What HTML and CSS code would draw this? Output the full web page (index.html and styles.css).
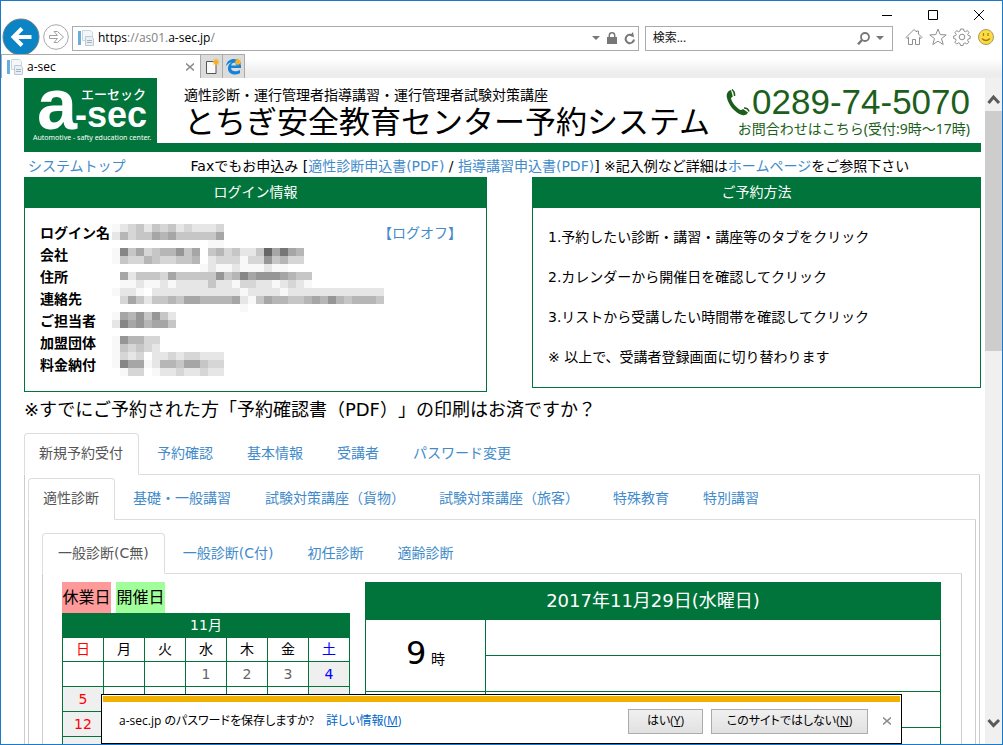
FILE: index.html
```html
<!DOCTYPE html>
<html lang="ja">
<head>
<meta charset="utf-8">
<title>a-sec</title>
<link rel="stylesheet" href="styles.css">
</head>
<body>
<div class="window">
  <header class="chrome">
    <div class="window-controls">
      <button class="ctl" aria-label="最小化"><svg width="12" height="12" viewBox="0 0 12 12"><path d="M1 6.500h10" class="ln"/></svg></button>
      <button class="ctl" aria-label="最大化"><svg width="12" height="12" viewBox="0 0 12 12"><path d="M1.500 1.500h9v9h-9z" class="ln"/></svg></button>
      <button class="ctl" aria-label="閉じる"><svg width="12" height="12" viewBox="0 0 12 12"><path d="M1 1l10 10M11 1L1 11" class="ln"/></svg></button>
    </div>
    <div class="toolbar">
      <button class="nav-back" aria-label="戻る"><svg width="38" height="38" viewBox="0 0 38 38"><circle cx="19" cy="19" r="18" fill="#0a84c4" stroke="#6e7f89"/><path d="M29.500 19H12M20 10.500L11.500 19l8.500 8.500" fill="none" stroke="#fff" stroke-width="4"/></svg></button>
      <button class="nav-fwd" aria-label="進む"><svg width="26" height="26" viewBox="0 0 26 26"><circle cx="13" cy="13" r="12.300" fill="#fff" stroke="#a9a9a9"/><path d="M6.500 11.500h8l-3.500-4h3.500l6 5.500-6 5.500H11l3.500-4h-8z" fill="#fff" stroke="#a0a0a0"/></svg></button>
      <div class="address">
        <svg width="16" height="16" viewBox="0 0 16 16"><path d="M0 1h3v14H0z" fill="#6aaedb"/><path d="M4.500.5h8l2 2v8h-10z" fill="#f3f7fa" stroke="#c9d6df"/><path d="M7.500 6.500h6l2 2v7h-8z" fill="#e9eff3" stroke="#bccad4"/><path d="M9 10.500h5M9 12.500h5" stroke="#9fb4c4"/></svg>
        <span class="url">https<i>://as01.</i>a-sec.jp<i>/</i></span>
        <svg width="8" height="4" viewBox="0 0 8 4"><path d="M0 0h8L4 4z" fill="#777"/></svg>
        <svg width="10" height="13" viewBox="0 0 10 13"><path d="M0 5h10v7H0z" fill="#777"/><path d="M2.300 6V3.500a2.700 2.700 0 0 1 5.400 0V6" fill="none" stroke="#777" stroke-width="1.500"/></svg>
        <button class="bare" aria-label="更新"><svg width="12" height="13" viewBox="0 0 12 13"><path d="M8.500 3.700A4.200 4.200 0 1 0 10 7.500" fill="none" stroke="#777" stroke-width="2"/><path d="M6 3.500L9 0l1 5.500z" fill="#777"/></svg></button>
      </div>
      <div class="search">
        <input type="text" aria-label="検索" placeholder="検索...">
        <svg width="13" height="13" viewBox="0 0 13 13"><circle cx="8" cy="5" r="4" fill="none" stroke="#777" stroke-width="1.800"/><path d="M5 8L1 12.300" stroke="#777" stroke-width="2.400"/></svg>
        <svg width="8" height="4" viewBox="0 0 8 4"><path d="M0 0h8L4 4z" fill="#777"/></svg>
      </div>
      <div class="tools">
        <button class="bare" aria-label="ホーム"><svg width="18" height="18" viewBox="0 0 18 18"><path d="M1 9.500L9 1.500l2.500 2.500V3h2v3L17 9.500l-1 1-1.500-1.200V16.500h-4v-5h-3v5h-4V9.300L2 10.500z" class="tool"/></svg></button>
        <button class="bare" aria-label="お気に入り"><svg width="18" height="18" viewBox="0 0 18 18"><path d="M9 1l2.200 5.600 6 .3-4.700 3.700 1.700 5.900L9 13.200l-5.200 3.300 1.700-5.900L.8 6.900l6-.3z" class="tool"/></svg></button>
        <button class="bare" aria-label="ツール"><svg width="18" height="18" viewBox="0 0 18 18"><path d="M7.500 1h3l.5 2 1.500.7L14.400 2.600 16 4.600 14.700 6.300l.5 1.200 2 .5v2.500l-2 .5-.6 1.400 1.200 1.800-2 1.800-1.700-1.200-1.600.7-.5 2h-2.500l-.5-2-1.600-.7-1.800 1.200-1.800-1.800 1.200-1.800L2.700 11l-2-.5V8l2-.5.6-1.200L2 4.600l1.700-2 1.900 1.100L7 3z" class="tool"/><circle cx="9" cy="9" r="2.800" class="tool"/></svg></button>
        <button class="bare" aria-label="フィードバック"><svg width="18" height="18" viewBox="0 0 18 18"><circle cx="9" cy="9" r="7.500" fill="#fddb43" stroke="#a79a62"/><path d="M6.500 5v3M11 5v3M5 10.500q4 4 8 0" fill="none" stroke="#a07c10" stroke-width="1.200"/></svg></button>
      </div>
    </div>
    <div class="tabstrip">
      <div class="tab">
        <svg width="16" height="16" viewBox="0 0 16 16"><path d="M0 1h3v14H0z" fill="#6aaedb"/><path d="M4.500.5h8l2 2v8h-10z" fill="#f3f7fa" stroke="#c9d6df"/><path d="M7.500 6.500h6l2 2v7h-8z" fill="#e9eff3" stroke="#bccad4"/><path d="M9 10.500h5M9 12.500h5" stroke="#9fb4c4"/></svg>
        <span class="tab-title">a-sec</span>
        <button class="bare" aria-label="タブを閉じる"><svg width="8" height="8" viewBox="0 0 8 8"><path d="M0 .5l8 7M8 .5l-8 7" stroke="#8b8b8b" stroke-width="1.500"/></svg></button>
      </div>
      <button class="newtab" aria-label="新しいタブ"><svg width="16" height="17" viewBox="0 0 16 17"><path d="M2.500 3.500h9.500v12H2.500z" fill="#fafafa" stroke="#555"/><circle cx="12" cy="4" r="2.500" fill="#ffc93a"/><path d="M12 .5v7M8.500 4h7M9.500 1.500l5 5M14.500 1.500l-5 5" stroke="#f0aa28"/></svg></button>
      <button class="newtab" aria-label="Microsoft Edge"><svg width="18" height="17" viewBox="0 0 18 17"><path d="M1 8C2 3 5 1 9 1c5 0 7 3 7 7v2H6c.5 4 5 4 9 2v3.200C9 18 2.500 16 3 9.500 3.200 7 5 5.300 7 4.500 4.500 4.700 2.500 6 1 8zM6.200 7.400h5.300C11.500 4 7 4 6.200 7.400z" fill="#1482d8"/><circle cx="13" cy="4" r="2.500" fill="#ffc93a"/><path d="M13 .5v7M9.500 4h7M10.500 1.500l5 5M15.500 1.500l-5 5" stroke="#f0aa28"/></svg></button>
    </div>
  </header>

  <div class="viewport">
    <main class="page">
      <div class="banner">
        <svg class="logo" width="133" height="65" viewBox="0 0 133 65" role="img" aria-label="a-sec">
          <text x="13" y="51" class="logo-a">a</text>
          <text x="51" y="49" class="logo-sec">-sec</text>
          <text x="57" y="21" class="logo-kana">エーセック</text>
          <text x="9" y="62" class="logo-sub">Automotive - safty education center.</text>
        </svg>
        <div class="title-block">
          <p class="subtitle">適性診断・運行管理者指導講習・運行管理者試験対策講座</p>
          <h1>とちぎ安全教育センター予約システム</h1>
        </div>
        <div class="contact">
          <p class="phone"><svg width="24" height="27" viewBox="0 0 24 27"><path d="M5 1C1.500 2 0 5 1 9c1.500 7 8 15 15 17 3 .7 5-.5 6-2.500L17 20c-1 .8-2 1.300-3 .7C10 18.500 6.500 14 5 9.800c0-1 .8-1.500 1.800-2.300z" fill="#1c5f1c"/><path d="M6 .5Q9 3 8.500 7M23 22.500Q22 19 18 19" fill="none" stroke="#1c5f1c" stroke-width="1.500"/></svg><span>0289-74-5070</span></p>
          <p class="hours">お問合わせはこちら(受付:9時～17時)</p>
        </div>
      </div>

      <div class="linkrow">
        <a href="#">システムトップ</a>
        <p>Faxでもお申込み [<a href="#">適性診断申込書(PDF)</a> / <a href="#">指導講習申込書(PDF)</a>] ※記入例など詳細は<a href="#">ホームページ</a>をご参照下さい</p>
      </div>

      <div class="panels">
        <section class="panel">
          <h2>ログイン情報</h2>
          <div class="account">
            <dl>
              <dt>ログイン名</dt><dd><a href="#">【ログオフ】</a></dd>
              <dt>会社</dt><dd></dd>
              <dt>住所</dt><dd></dd>
              <dt>連絡先</dt><dd></dd>
              <dt>ご担当者</dt><dd></dd>
              <dt>加盟団体</dt><dd></dd>
              <dt>料金納付</dt><dd></dd>
            </dl>
            <svg class="mask" id="mask" width="272" height="152" viewBox="0 0 272 152" shape-rendering="crispEdges" aria-hidden="true"></svg>
          </div>
        </section>
        <section class="panel">
          <h2>ご予約方法</h2>
          <div class="steps">
            <p>1.予約したい診断・講習・講座等のタブをクリック</p>
            <p>2.カレンダーから開催日を確認してクリック</p>
            <p>3.リストから受講したい時間帯を確認してクリック</p>
            <p>※ 以上で、受講者登録画面に切り替わります</p>
          </div>
        </section>
      </div>

      <p class="notice">※すでにご予約された方「予約確認書（PDF）」の印刷はお済ですか？</p>

      <nav class="tabs"><a class="on" href="#">新規予約受付</a><a href="#">予約確認</a><a href="#">基本情報</a><a href="#">受講者</a><a href="#">パスワード変更</a></nav>
      <div class="pane outer">
        <nav class="tabs"><a class="on" href="#">適性診断</a><a href="#">基礎・一般講習</a><a href="#">試験対策講座（貨物）</a><a href="#">試験対策講座（旅客）</a><a href="#">特殊教育</a><a href="#">特別講習</a></nav>
        <div class="pane middle">
          <nav class="tabs short"><a class="on" href="#">一般診断(C無)</a><a href="#">一般診断(C付)</a><a href="#">初任診断</a><a href="#">適齢診断</a></nav>
          <div class="pane inner">
            <div class="cal-col">
              <div class="legend"><span class="closed">休業日</span><span class="open">開催日</span></div>
              <table class="calendar">
                <thead>
                  <tr><th colspan="7" class="month">11月</th></tr>
                  <tr><th class="sun">日</th><th>月</th><th>火</th><th>水</th><th>木</th><th>金</th><th class="sat">土</th></tr>
                </thead>
                <tbody>
                  <tr><td></td><td></td><td></td><td>1</td><td>2</td><td>3</td><td class="sat off">4</td></tr>
                  <tr><td class="sun off">5</td><td></td><td></td><td></td><td></td><td></td><td class="off"></td></tr>
                  <tr><td class="sun off">12</td><td></td><td></td><td></td><td></td><td></td><td class="off"></td></tr>
                  <tr><td class="sun off"></td><td></td><td></td><td></td><td></td><td></td><td class="off"></td></tr>
                </tbody>
              </table>
            </div>
            <table class="schedule">
              <thead><tr><th colspan="2">2017年11月29日(水曜日)</th></tr></thead>
              <tbody>
                <tr><th rowspan="2" class="hour"><b>9</b> 時</th><td></td></tr>
                <tr><td></td></tr>
                <tr><th rowspan="2" class="hour"></th><td></td></tr>
                <tr><td></td></tr>
              </tbody>
            </table>
          </div>
        </div>
      </div>
    </main>
    <div class="scrollbar">
      <svg class="arrow" width="17" height="33" viewBox="0 0 17 33"><path d="M3.500 25L8.500 19l5.500 6" class="chev"/></svg>
      <div class="thumb"></div>
      <svg class="arrow" width="17" height="32" viewBox="0 0 17 32"><path d="M3.500 8L8.500 13.500 14 8" class="chev"/></svg>
    </div>
  </div>

  <div class="notify" role="dialog" aria-label="パスワードの保存">
    <span>a-sec.jp のパスワードを保存しますか?</span>
    <a href="#">詳しい情報(<u>M</u>)</a>
    <div class="actions">
      <button class="act yes">はい(<u>Y</u>)</button>
      <button class="act no">このサイトではしない(<u>N</u>)</button>
      <button class="bare" aria-label="閉じる"><svg width="8" height="8" viewBox="0 0 8 8"><path d="M0 .5l8 7M8 .5l-8 7" stroke="#8b8b8b" stroke-width="1.500"/></svg></button>
    </div>
  </div>
</div>
<script src="mask.js"></script>
</body>
</html>
```
FILE: mask.js
```js
// Privacy mosaic over the account values: one hex digit of grey per 8px block.
const rows = [
  "fedcecdcedeeed",
  "ebdccabaccccca",
  "............ff",
  "f8cadcbb9ca.cbdceec6a7ab",
  "fcddbcddccb.edddfdd9cbdd",
  "...........feffefffeff",
  ".aecccdaccccc9cb8a999abcc",
  ".ffeffefeeeeceefddeefedef",
  "feef.eeeeeeeeeeefeeeefeeeeeeeeeeee",
  ".daceccbcaabbbbaefcabbccbab9bcbbbc",
  "................f",
  "fab9c9ce",
  "e8a9baac",
  "",
  "f9bbdd",
  "fcdcde",
  "fded.eededdeee",
  "f8aafebbcaacdd",
  ".fdd.feedeedee"
];
const svg = document.getElementById("mask");
rows.forEach((row, y) => {
  [...row].forEach((c, x) => {
    if (c === ".") return;
    const block = document.createElementNS("http://www.w3.org/2000/svg", "rect");
    block.setAttribute("x", x * 8);
    block.setAttribute("y", y * 8);
    block.setAttribute("width", 8);
    block.setAttribute("height", 8);
    block.setAttribute("fill", "#" + (c + (c === "f" ? "8" : "6")).repeat(3));
    svg.appendChild(block);
  });
});
```
FILE: styles.css
```css
* { box-sizing: border-box; }
body { margin: 0; }
p, h1, h2, dl, dd { margin: 0; }
a { color: #428bca; text-decoration: none; }
svg { display: block; flex: none; }
button { font: inherit; padding: 0; cursor: default; }

.window {
  position: relative;
  display: flex;
  flex-direction: column;
  height: 100vh;
  overflow: hidden;
  border: 1px solid #1979ca;
  background: #fff;
  color: #000;
  font: 14px/20px "DejaVu Sans", "Noto Sans CJK JP", sans-serif;
  text-spacing-trim: space-all;
}

/* browser chrome */
.chrome { flex: none; font: 12px/16px "Open Sans", "Noto Sans CJK JP", sans-serif; }
.window-controls { display: flex; justify-content: flex-end; gap: 34px; height: 19px; padding: 8px 17px 0 0; }
.ctl, .bare, .nav-back, .nav-fwd { border: 0; background: none; }
.ln { fill: none; stroke: #000; }
.toolbar { display: flex; align-items: center; height: 34px; padding-left: 1px; }
.nav-back { flex: none; width: 38px; height: 38px; }
.nav-fwd { flex: none; margin: 0 3px; }
.address, .search { display: flex; align-items: center; height: 25px; margin-top: 2px; border: 1px solid #ababab; background: #fff; }
.address { flex: 554 1 0; padding: 0 5px; gap: 7px; }
.search { flex: 231 1 0; margin-left: 6px; padding: 0 8px 0 7px; gap: 6px; }
.url { flex: 1; }
.address svg:first-child { margin-right: -3px; }
.url i { font-style: normal; color: #808080; }
.search input { flex: 1; min-width: 0; padding: 0; border: 0; outline: 0; background: none; color: #000; font: inherit; }
.search input::placeholder { color: #111; opacity: 1; }
.tools { display: flex; gap: 6px; padding: 0 7px 0 12px; }
.tool { fill: none; stroke: #8e8e8e; }
.tabstrip { position: relative; display: flex; height: 24px; background: linear-gradient(#fff 20%, #ededed 80%); }
.tab { display: flex; align-items: center; gap: 4px; width: 200px; padding: 0 6px 0 5px; border: 1px solid #ababab; border-width: 1px 1px 0; background: #fff; }
.tab-title { flex: 1; }
.newtab { display: flex; align-items: center; justify-content: center; width: 22px; border: 1px solid #ababab; border-width: 1px 1px 0 0; background: #dcdcdc; }

/* page area */
.viewport { display: flex; flex: 1; min-height: 0; }
.page { flex: 1; min-width: 0; overflow: hidden; padding: 0 4px 0 23px; }
.scrollbar { display: flex; flex-direction: column; width: 17px; background: #f0f0f0; }
.thumb { height: 36%; background: #cdcdcd; }
.scrollbar .arrow:last-child { margin-top: auto; }
.chev { fill: none; stroke: #5a5a5a; stroke-width: 3; }

.banner { display: flex; height: 74px; border-bottom: 9px solid #00743a; }
.logo { background: #00743a; }
.logo text { fill: #fff; font-family: "Liberation Sans", "Noto Sans CJK JP", sans-serif; font-weight: bold; }
.logo .logo-a { font-size: 72px; }
.logo .logo-sec { font-size: 36px; }
.logo .logo-kana { font-size: 13px; font-weight: 500; }
.logo .logo-sub { font-family: "Noto Sans", sans-serif; font-size: 7px; font-weight: normal; }
.title-block { flex: 1; min-width: 0; padding: 7px 0 0 27px; white-space: nowrap; }
.subtitle { line-height: 20px; }
h1 { font-size: 31px; font-weight: normal; line-height: 34px; }
.contact { flex: none; padding: 6px 11px 0 0; color: #1c5f1c; text-align: right; font-family: "Noto Sans", "Noto Sans CJK JP", sans-serif; }
.phone { display: flex; align-items: center; justify-content: flex-end; gap: 2px; font: 35px/36px "Liberation Sans", sans-serif; }
.hours { line-height: 18px; }

.linkrow { display: flex; height: 25px; padding: 4px 0 0 4px; white-space: nowrap; }
.linkrow p { margin-left: 65px; }

.panels { display: grid; grid-template-columns: 463fr 449fr; align-items: start; gap: 45px; }
.panel { border: 1px solid #00743a; }
.panel h2 { height: 30px; background: #00743a; color: #fff; font-size: 14px; font-weight: normal; line-height: 28px; text-align: center; }
.account { position: relative; padding: 14px 15px; }
.account dl { display: grid; grid-template-columns: 80px 1fr; padding-bottom: 1px; line-height: 22px; }
.account dt { font-weight: bold; white-space: nowrap; }
.account dd { height: 22px; padding-right: 9px; text-align: right; }
.mask { position: absolute; left: 87px; top: 16px; }
.steps { display: flex; flex-direction: column; gap: 20px; padding: 19px 15px 20px; }

.notice { padding: 6px 0 11px; font-size: 18px; line-height: 24px; }

.tabs { display: flex; gap: 2px; border-bottom: 1px solid #ddd; white-space: nowrap; }
.tabs a { margin-bottom: -1px; padding: 9px 15px 11px; border: 1px solid transparent; border-radius: 4px 4px 0 0; }
.tabs .on { padding-left: 14px; border-color: #ddd #ddd #fff; background: #fff; color: #555; }
.tabs.short a { padding: 9px 15px 10px; }
.outer, .notice + .tabs { margin-right: 1px; }
.pane { border: 1px solid #ccc; border-width: 0 1px; }
.outer { padding: 3px 3px 0; }
.middle { padding: 13px 13px 0; }
.inner { display: flex; align-items: flex-start; gap: 15px; padding: 8px 20px 0 19px; }

.cal-col { flex: none; width: 288px; }
.legend { display: flex; gap: 5px; font-size: 16px; line-height: 31px; }
.legend span { width: 49px; text-align: center; }
.closed { background: #ff9a9a; }
.open { background: #a0ff9a; }
table { border-collapse: collapse; table-layout: fixed; width: 100%; }
th, td { padding: 0; border: 1px solid #00743a; font-weight: normal; text-align: center; }
.calendar th { height: 24px; padding-bottom: 2px; }
.calendar td { height: 25px; color: #666; }
.calendar .month, .schedule thead th { background: #00743a; color: #fff; }
.calendar .off { background: #efefef; }
.calendar .sun { color: #f00; }
.calendar .sat { color: #00f; }
.schedule { flex: 1; width: auto; min-width: 0; }
.schedule thead th { height: 37px; font-size: 18px; }
.schedule td { height: 36px; }
.schedule .hour { width: 120px; padding-bottom: 6px; }
.hour b { font-size: 32px; font-weight: normal; line-height: 40px; }

/* password prompt */
.notify {
  position: absolute;
  left: 100px;
  right: 100px;
  bottom: 0;
  display: flex;
  align-items: center;
  gap: 12px;
  height: 50px;
  padding: 4px 10px 0 17px;
  border: 1px solid #000;
  background: linear-gradient(#f2b100, #f2b100) 1px 1px / calc(100% - 2px) 6px no-repeat #fff;
  font: 12px/16px "Open Sans", "Noto Sans CJK JP", sans-serif;
  font-feature-settings: "palt";
  white-space: nowrap;
}
.notify a { color: #0066cc; }
.actions { display: flex; align-items: center; gap: 8px; margin-left: auto; }
.act { height: 25px; border: 1px solid #ababab; background: linear-gradient(#f0f0f0, #e1e1e1); font-feature-settings: "palt"; }
.yes { width: 75px; }
.no { width: 157px; margin-right: 7px; }
```
